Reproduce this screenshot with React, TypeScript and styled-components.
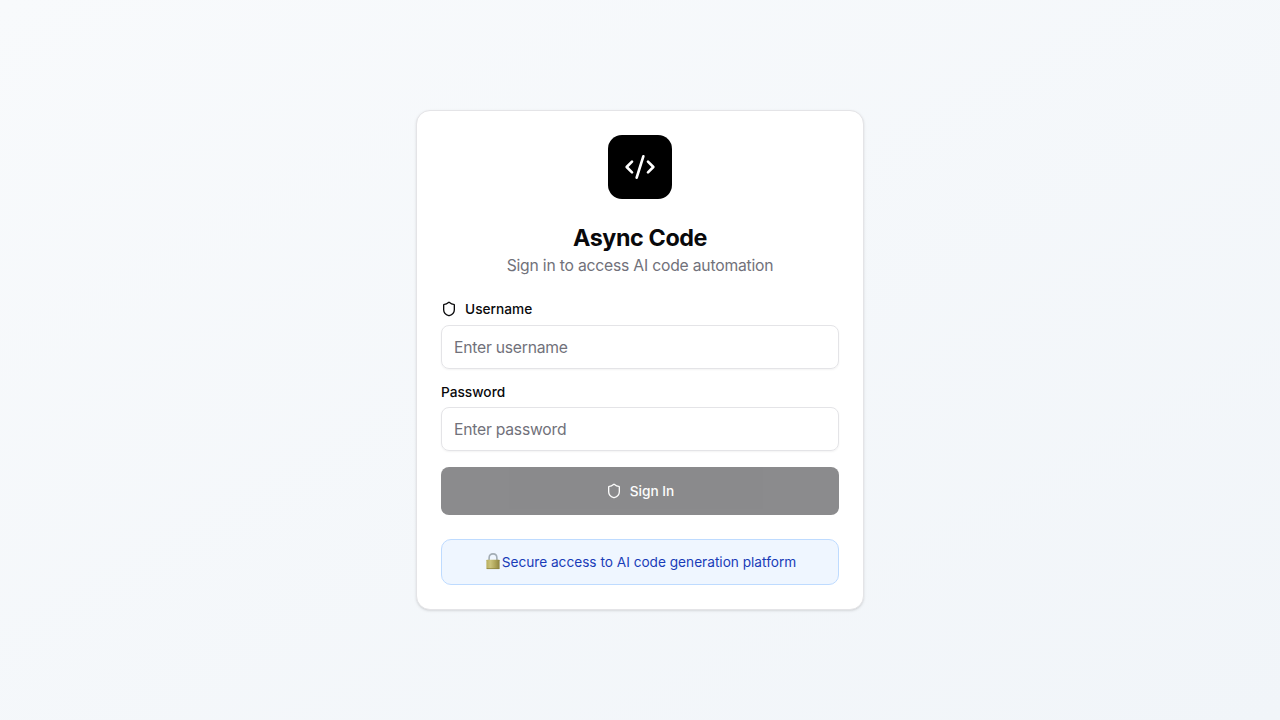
import React from "react";
import styled, { createGlobalStyle } from "styled-components";

const GlobalStyle = createGlobalStyle`
  *, *::before, *::after { box-sizing: border-box; }
  body {
    margin: 0;
    font-family: Inter, "Liberation Sans", sans-serif;
    color: #09090b;
    -webkit-font-smoothing: antialiased;
  }
`;

const Page = styled.main`
  min-height: 100vh;
  display: flex;
  align-items: center;
  justify-content: center;
  padding: 16px;
  background: linear-gradient(to bottom right, #f8fafc, #f1f5f9);
`;

const Card = styled.section`
  width: 448px;
  padding: 24px;
  display: flex;
  flex-direction: column;
  gap: 24px;
  background: #fff;
  border: 1px solid #e4e4e7;
  border-radius: 14px;
  box-shadow: 0 1px 3px rgba(0, 0, 0, 0.1), 0 1px 2px -1px rgba(0, 0, 0, 0.1);
`;

const Header = styled.header`
  display: flex;
  flex-direction: column;
  align-items: center;
  text-align: center;
`;

const Logo = styled.div`
  width: 64px;
  height: 64px;
  display: flex;
  align-items: center;
  justify-content: center;
  margin-bottom: 24px;
  background: #000;
  color: #fff;
  border-radius: 14px;
`;

const Title = styled.h1`
  margin: 0;
  font-size: 23.3px;
  line-height: 30px;
  font-weight: 700;
  letter-spacing: -0.38px;
`;

const Subtitle = styled.p`
  margin: 0;
  padding-top: 1px;
  font-size: 15.7px;
  line-height: 23px;
  letter-spacing: -0.2px;
  color: #71717a;
`;

const Form = styled.form`
  display: flex;
  flex-direction: column;
  gap: 16px;
`;

const Field = styled.div`
  display: flex;
  flex-direction: column;
  gap: 8px;
`;

const Label = styled.label`
  display: flex;
  align-items: center;
  gap: 8px;
  font-size: 13.7px;
  line-height: 14px;
  font-weight: 500;
`;

const Input = styled.input`
  width: 100%;
  height: 44px;
  padding: 4px 12px;
  font: inherit;
  font-size: 15.7px;
  letter-spacing: -0.23px;
  color: inherit;
  background: transparent;
  border: 1px solid #e4e4e7;
  border-radius: 8px;
  box-shadow: 0 1px 2px rgba(0, 0, 0, 0.05);
  outline: none;

  &::placeholder { color: #71717a; opacity: 1; }
`;

const SubmitButton = styled.button`
  height: 48px;
  display: flex;
  align-items: center;
  justify-content: center;
  gap: 8px;
  border: 0;
  border-radius: 8px;
  background: #18181b;
  color: #fafafa;
  font: inherit;
  font-size: 13.7px;
  line-height: 20px;
  font-weight: 500;

  &:disabled { opacity: 0.5; }
`;

const ButtonText = styled.span`
  padding-bottom: 1px;
`;

const Notice = styled.div`
  height: 46px;
  display: flex;
  align-items: center;
  justify-content: center;
  border: 1px solid #bedbff;
  border-radius: 10px;
  background: #eff6ff;
  color: #193cb8;
  font-size: 13.65px;
  line-height: 20px;
`;

const LockSvg = styled.svg`
  width: 18px;
  height: 18px;
  flex: none;
  margin-bottom: 2px;
`;

function CodeIcon() {
  return (
    <svg width="32" height="32" viewBox="0 0 24 24" fill="none" stroke="currentColor" strokeWidth="2" strokeLinecap="round" strokeLinejoin="round">
      <path d="m18 16 4-4-4-4" />
      <path d="m6 8-4 4 4 4" />
      <path d="m14.5 4-5 16" />
    </svg>
  );
}

function ShieldIcon() {
  return (
    <svg width="16" height="16" viewBox="0 0 24 24" fill="none" stroke="currentColor" strokeWidth="2" strokeLinecap="round" strokeLinejoin="round">
      <path d="M20 13c0 5-3.5 7.5-7.66 8.95a1 1 0 0 1-.67-.01C7.5 20.5 4 18 4 13V6a1 1 0 0 1 1-1c2 0 4.5-1.2 6.24-2.72a1.17 1.17 0 0 1 1.52 0C14.51 3.81 17 5 19 5a1 1 0 0 1 1 1z" />
    </svg>
  );
}

function LockIcon() {
  return (
    <LockSvg viewBox="0 0 18 18">
      <defs>
        <linearGradient id="brass" x1="0" x2="1">
          <stop offset="0" stopColor="#b8ae5d" />
          <stop offset="0.3" stopColor="#cbc37c" />
          <stop offset="0.65" stopColor="#b0a65b" />
          <stop offset="1" stopColor="#8d833f" />
        </linearGradient>
      </defs>
      <path d="M5.1 9V5.9C5.1 3.3 6.8 1.9 9 1.9s3.9 1.4 3.9 4V9" fill="none" stroke="#a3adb5" strokeWidth="1.6" />
      <rect x="2.4" y="7.7" width="13.2" height="9.3" rx="0.6" fill="url(#brass)" />
      <path d="M2.8 16.6h12.4" stroke="#8d833f" strokeWidth="0.8" />
    </LockSvg>
  );
}

export default function App() {
  return (
    <>
      <GlobalStyle />
      <Page>
        <Card>
          <Header>
            <Logo><CodeIcon /></Logo>
            <Title>Async Code</Title>
            <Subtitle>Sign in to access AI code automation</Subtitle>
          </Header>
          <Form>
            <Field>
              <Label htmlFor="username"><ShieldIcon />Username</Label>
              <Input id="username" placeholder="Enter username" />
            </Field>
            <Field>
              <Label htmlFor="password">Password</Label>
              <Input id="password" type="password" placeholder="Enter password" />
            </Field>
            <SubmitButton type="submit" disabled><ShieldIcon /><ButtonText>Sign In</ButtonText></SubmitButton>
          </Form>
          <Notice><LockIcon />Secure access to AI code generation platform</Notice>
        </Card>
      </Page>
    </>
  );
}
